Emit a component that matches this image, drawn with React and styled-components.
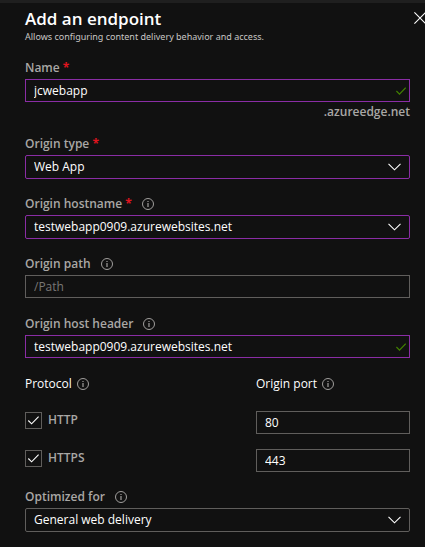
import React from "react";
import styled, { createGlobalStyle } from "styled-components";

const color = {
  page: "#111111",
  strip: "#1f1f1f",
  text: "#ffffff",
  label: "#a9a7a5",
  accent: "#8a2da5",
  line: "#605e5c",
  placeholder: "#797775",
  required: "#e0141f",
  valid: "#428000",
};

const GlobalStyle = createGlobalStyle`
  * { box-sizing: border-box; }
  body {
    margin: 0;
    background: ${color.page};
    color: ${color.text};
    font-family: "Open Sans", "Noto Sans", sans-serif;
    font-size: 12px;
    line-height: 18px;
  }
`;

const Panel = styled.main`
  min-height: 100vh;
  border-top: 3px solid ${color.strip};
  overflow-x: hidden;
`;

const Header = styled.header`
  display: flex;
  align-items: flex-start;
  justify-content: space-between;
  padding: 4px 0 0 25px;
`;

const Title = styled.h1`
  margin: 0;
  font-size: 17px;
  line-height: 24px;
  font-weight: 600;
`;

const Subtitle = styled.p`
  margin: 0;
  font-family: "Noto Sans", "Open Sans", sans-serif;
  font-size: 9px;
  line-height: 12px;
  color: #c8c6c4;
`;

const CloseButton = styled.button`
  display: flex;
  flex: none;
  margin-top: 5px;
  padding: 0;
  border: 0;
  background: none;
  color: ${color.text};
`;

const Form = styled.form`
  display: flex;
  flex-direction: column;
  gap: 16px;
  padding: 16px 15px 12px 25px;
`;

const Field = styled.div`
  display: flex;
  flex-direction: column;
  gap: 2px;
`;

const LabelRow = styled.div`
  display: flex;
  align-items: center;
  gap: ${(p) => (p.$tight ? "5px" : "10px")};
  color: ${(p) => (p.$bright ? color.text : color.label)};
`;

const Label = styled.label`
  font-weight: 600;
`;

const Required = styled.span`
  color: ${color.required};
  font-weight: 700;
`;

const ControlBox = styled.div`
  position: relative;
  display: flex;
  align-items: flex-start;
  min-height: 24px;
`;

const TextInput = styled.input`
  width: 100%;
  height: 23px;
  padding: 0 8px;
  border: 1px solid ${(p) => (p.$changed ? color.accent : color.line)};
  border-radius: 0;
  outline: 0;
  background: transparent;
  color: ${color.text};
  font: inherit;
  &::placeholder { color: ${color.placeholder}; opacity: 1; }
`;

const SelectInput = styled.select`
  appearance: none;
  width: 100%;
  height: 24px;
  padding: 0 32px 0 8px;
  border: 1px solid ${(p) => (p.$changed ? color.accent : color.line)};
  border-radius: 2px;
  outline: 0;
  background: ${color.page};
  color: ${color.text};
  font: inherit;
`;

const Adornment = styled.span`
  position: absolute;
  top: 0;
  bottom: 0;
  right: ${(p) => p.$right}px;
  display: flex;
  align-items: center;
  pointer-events: none;
`;

const Suffix = styled.div`
  line-height: 14px;
  text-align: right;
  font-weight: 600;
  color: ${color.label};
`;

const Ports = styled.div`
  display: grid;
  grid-template-columns: 3fr 2fr;
  row-gap: 15px;
`;

const PortsHead = styled.div`
  display: flex;
  padding-bottom: 3px;
`;

const Heading = styled.span`
  font-weight: 400;
`;

const CheckRow = styled.label`
  display: flex;
  align-items: center;
  align-self: start;
  gap: 6px;
  color: ${color.label};
  font-weight: 600;
`;

const CheckFrame = styled.span`
  position: relative;
  display: flex;
  width: 17px;
  height: 17px;
`;

const Checkbox = styled.input`
  appearance: none;
  width: 17px;
  height: 17px;
  margin: 0;
  border: 1px solid ${color.line};
  & + svg { display: none; }
  &:checked + svg { display: block; }
`;

const CheckMark = styled.svg`
  position: absolute;
  inset: 0;
  pointer-events: none;
`;

const InfoSvg = styled.svg`
  display: block;
  flex: none;
  color: #a19f9d;
`;

const InfoIcon = () => (
  <InfoSvg width="12" height="12" viewBox="0 0 12 12" fill="none" role="img" aria-label="Info">
    <circle cx="6" cy="6" r="5.5" stroke="currentColor" />
    <path d="M6 5v4M6 3v1" stroke="currentColor" strokeWidth="1.2" />
  </InfoSvg>
);

const Chevron = () => (
  <Adornment $right={9}>
    <svg width="13" height="8" viewBox="0 0 13 8" fill="none" aria-hidden="true">
      <path d="M.5 .8 6.5 6.8 12.5 .8" stroke="#fff" strokeWidth="1.1" />
    </svg>
  </Adornment>
);

const ValidMark = () => (
  <Adornment $right={4}>
    <svg width="10" height="8" viewBox="0 0 10 8" fill="none" aria-hidden="true">
      <path d="M.4 4 3.5 7.1 9.7 .7" stroke={color.valid} strokeWidth="1.2" />
    </svg>
  </Adornment>
);

function FieldLabel({ id, text, required, info }) {
  return (
    <LabelRow>
      <Label htmlFor={id}>
        {text}
        {required && <Required> *</Required>}
      </Label>
      {info && <InfoIcon />}
    </LabelRow>
  );
}

function TextField({ id, label, required, info, valid, suffix, ...input }) {
  return (
    <Field>
      <FieldLabel id={id} text={label} required={required} info={info} />
      <ControlBox>
        <TextInput id={id} type="text" spellCheck={false} $changed={valid} {...input} />
        {valid && <ValidMark />}
      </ControlBox>
      {suffix && <Suffix>{suffix}</Suffix>}
    </Field>
  );
}

function SelectField({ id, label, required, info, changed, value }) {
  return (
    <Field>
      <FieldLabel id={id} text={label} required={required} info={info} />
      <ControlBox>
        <SelectInput id={id} defaultValue={value} $changed={changed}>
          <option>{value}</option>
        </SelectInput>
        <Chevron />
      </ControlBox>
    </Field>
  );
}

function PortRow({ name, port }) {
  return (
    <>
      <CheckRow>
        <CheckFrame>
          <Checkbox type="checkbox" defaultChecked />
          <CheckMark width="17" height="17" viewBox="0 0 17 17" fill="none" aria-hidden="true">
            <path d="M3.3 8.5 6.6 11.8 13.6 4.6" stroke="#fff" strokeWidth="1.1" />
          </CheckMark>
        </CheckFrame>
        {name}
      </CheckRow>
      <TextInput type="text" defaultValue={port} aria-label={`${name} origin port`} />
    </>
  );
}

export default function App() {
  return (
    <>
      <GlobalStyle />
      <Panel>
        <Header>
          <div>
            <Title>Add an endpoint</Title>
            <Subtitle>Allows configuring content delivery behavior and access.</Subtitle>
          </div>
          <CloseButton type="button" aria-label="Close">
            <svg width="11" height="12" viewBox="0 0 11 12" fill="none" aria-hidden="true">
              <path d="M.4 .4 11.6 11.6M11.6 .4 .4 11.6" stroke="currentColor" strokeWidth="1.1" />
            </svg>
          </CloseButton>
        </Header>
        <Form>
          <TextField id="name" label="Name" required valid suffix=".azureedge.net" defaultValue="jcwebapp" />
          <SelectField id="type" label="Origin type" required changed value="Web App" />
          <SelectField id="hostname" label="Origin hostname" required info changed value="testwebapp0909.azurewebsites.net" />
          <TextField id="path" label="Origin path" info placeholder="/Path" />
          <TextField id="header" label="Origin host header" info valid defaultValue="testwebapp0909.azurewebsites.net" />
          <Ports>
            <PortsHead>
              <LabelRow $tight $bright>
                <Heading>Protocol</Heading>
                <InfoIcon />
              </LabelRow>
            </PortsHead>
            <PortsHead>
              <LabelRow $tight $bright>
                <Heading>Origin port</Heading>
                <InfoIcon />
              </LabelRow>
            </PortsHead>
            <PortRow name="HTTP" port="80" />
            <PortRow name="HTTPS" port="443" />
          </Ports>
          <SelectField id="optimized" label="Optimized for" info value="General web delivery" />
        </Form>
      </Panel>
    </>
  );
}
